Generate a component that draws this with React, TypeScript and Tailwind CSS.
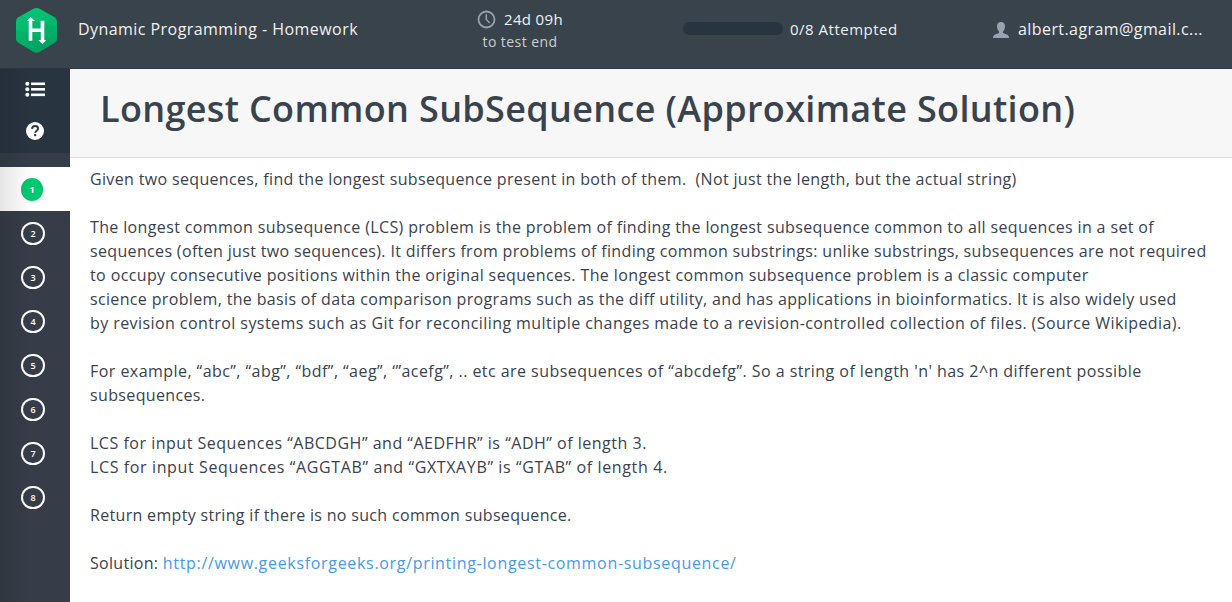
const lines: { text: string; spacing: string }[] = [
  { text: "Given two sequences, find the longest subsequence present in both of them.\u00a0 (Not just the length, but the actual string)", spacing: "tracking-[0.345px]" },
  { text: "", spacing: "" },
  { text: "The longest common subsequence (LCS) problem is the problem of finding the longest subsequence common to all sequences in a set of", spacing: "tracking-[0.362px]" },
  { text: "sequences (often just two sequences). It differs from problems of finding common substrings: unlike substrings, subsequences are not required", spacing: "tracking-[0.342px]" },
  { text: "to occupy consecutive positions within the original sequences. The longest common subsequence problem is a classic computer", spacing: "tracking-[0.382px]" },
  { text: "science problem, the basis of data comparison programs such as the diff utility, and has applications in bioinformatics. It is also widely used", spacing: "tracking-[0.344px]" },
  { text: "by revision control systems such as Git for reconciling multiple changes made to a revision-controlled collection of files. (Source Wikipedia).", spacing: "tracking-[0.421px]" },
  { text: "", spacing: "" },
  { text: "For example, “abc”, “abg”, “bdf”, “aeg”, ‘”acefg”, .. etc are subsequences of “abcdefg”. So a string of length 'n' has 2^n different possible", spacing: "tracking-[0.45px]" },
  { text: "subsequences.", spacing: "tracking-[0.36px]" },
  { text: "", spacing: "" },
  { text: "LCS for input Sequences “ABCDGH” and “AEDFHR” is “ADH” of length 3.", spacing: "tracking-[0.51px]" },
  { text: "LCS for input Sequences “AGGTAB” and “GXTXAYB” is “GTAB” of length 4.", spacing: "tracking-[0.62px]" },
  { text: "", spacing: "" },
  { text: "Return empty string if there is no such common subsequence.", spacing: "tracking-[0.32px]" },
  { text: "", spacing: "" },
];

function Logo() {
  return (
    <svg width="42" height="46" viewBox="0 0 42 46" className="ml-[15px] mt-[7px] shrink-0">
      <defs>
        <linearGradient id="hex" x1="0" y1="0" x2="0.3" y2="1">
          <stop offset="0" stopColor="#05cd77" />
          <stop offset="1" stopColor="#00a463" />
        </linearGradient>
      </defs>
      <path
        d="M18.5 1.7Q21.5 0.2 24.5 1.7L39.6 10.3Q42 11.8 42 14.5V31.8Q42 34.3 39.6 35.8L24.5 45Q21.5 46.6 18.5 45L3.4 35.8Q1 34.3 1 31.8V14.5Q1 11.8 3.4 10.3Z"
        fill="url(#hex)"
      />
      <path d="M1 23L41 36L28 43L1 30Z" fill="#009c5d" opacity="0.16" />
      <path d="M6 9L42 21V27L1 13Z" fill="#009c5d" opacity="0.13" />
      <path
        d="M15.8 10L20 14H17.3V21.4H25.6V13.7H29.3V33H31.2L27.4 37L23.2 33H25.8V25H17.3V33.8H13.7V14H11.9Z"
        fill="#fff"
      />
    </svg>
  );
}

function Header() {
  return (
    <header className="flex h-[69px] items-start border-b border-[#2a343f] bg-[#39434c] text-[#f0f1f2]">
      <Logo />
      <div className="ml-[21px] mt-[17px] w-[392px] whitespace-nowrap text-base leading-6 tracking-[0.443px]">Dynamic Programming - Homework</div>
      <div className="mt-2 flex w-[100px] flex-col items-center whitespace-nowrap">
        <div className="flex items-center gap-2 text-[15px] leading-[22px] tracking-[0.35px]">
          <svg width="19" height="19" viewBox="0 0 19 19" fill="none" stroke="#98a2b2" strokeWidth="1.8">
            <circle cx="9.5" cy="9.5" r="8" />
            <path d="M9.3 4.2V9.5L12.8 13" strokeWidth="1.5" />
          </svg>
          24d 09h
        </div>
        <div className="pt-px text-[14px] leading-[22px] tracking-[0.44px] text-[#cccfd2]">to test end</div>
      </div>
      <div className="ml-[113px] mt-[22px] h-[13px] w-[100px] rounded-full bg-[#28343f]" />
      <div className="ml-[7px] mt-[17px] w-[203px] whitespace-nowrap text-[15px] leading-6 tracking-[0.5px]">0/8 Attempted</div>
      <svg width="16" height="16" viewBox="0 0 16 16" className="mt-[22px]">
        <path d="M8 0C10.7 0 12 1.7 12 4.3C12 6.7 11.2 8.4 10 9.3V11L14.5 12.7Q16 13.4 16 16H0Q0 13.4 1.5 12.7L6 11V9.3C4.8 8.4 4 6.7 4 4.3C4 1.7 5.3 0 8 0Z" fill="#98a2b2" />
      </svg>
      <div className="ml-[9px] mt-[17px] whitespace-nowrap text-base leading-6 tracking-[0.42px]">albert.agram@gmail.c...</div>
    </header>
  );
}

function Sidebar() {
  return (
    <nav className="relative flex w-[70px] shrink-0 flex-col bg-[#363d48]">
      <div className="flex h-[84px] flex-col items-center bg-[#283440]">
        <svg width="20" height="16" viewBox="0 0 20 16" fill="#fff" className="mt-3">
          <circle cx="2.3" cy="2.8" r="2" />
          <circle cx="2.3" cy="8.3" r="2" />
          <circle cx="2.3" cy="13.8" r="2" />
          <rect x="6" y="1.5" width="14" height="2.6" />
          <rect x="6" y="7" width="14" height="2.6" />
          <rect x="6" y="12.5" width="14" height="2.6" />
        </svg>
        <svg width="18" height="18" viewBox="0 0 18 18" className="mt-[25px]">
          <circle cx="9" cy="9" r="9" fill="#fff" />
          <path d="M6 6.9C6.2 4.9 7.4 4 9.1 4C10.9 4 12.1 5 12.1 6.5C12.1 8.6 9.2 8.7 9.2 10.8" fill="none" stroke="#283440" strokeWidth="1.9" />
          <rect x="8.1" y="12.1" width="2.1" height="2.1" fill="#283440" />
        </svg>
      </div>
      <div className="mt-[14px] flex h-11 items-center bg-white pl-[21px] pt-px">
        <div className="flex h-[23px] w-[22px] items-center justify-center rounded-full bg-[#00c970] text-[9px] font-bold text-white">1</div>
      </div>
      {[2, 3, 4, 5, 6, 7, 8].map((n) => (
        <div key={n} className="flex h-11 items-center pl-[21px] pt-px">
          <div className="flex h-[23px] w-6 items-center justify-center rounded-full border-2 border-white text-[9px] font-semibold text-white">{n}</div>
        </div>
      ))}
      <div className="pointer-events-none absolute inset-y-0 left-0 w-8 bg-gradient-to-r from-black/10 to-transparent" />
    </nav>
  );
}

export default function App() {
  return (
    <div className="flex h-[602px] w-full flex-col overflow-hidden bg-white font-['Open_Sans',sans-serif] text-[#39424e]">
      <Header />
      <div className="flex min-h-0 flex-1">
        <Sidebar />
        <main className="min-w-0 flex-1">
          <div className="h-[89px] border-b border-[#dcdcdc] bg-[#f7f7f7] pl-[30px]">
            <h1 className="whitespace-nowrap pt-4 text-[36px] font-semibold leading-[48px] tracking-[0.34px] text-[#39434d]">Longest Common SubSequence (Approximate Solution)</h1>
          </div>
          <div className="whitespace-nowrap pl-5 pt-[9px] text-base leading-6">
            {lines.map((line, i) => (
              <p key={i} className={`h-6 ${line.spacing}`}>{line.text}</p>
            ))}
            <p className="tracking-[0.3px]">
              Solution: <a className="tracking-[0.68px] text-[#4799eb]">http://www.geeksforgeeks.org/printing-longest-common-subsequence/</a>
            </p>
          </div>
        </main>
      </div>
    </div>
  );
}
